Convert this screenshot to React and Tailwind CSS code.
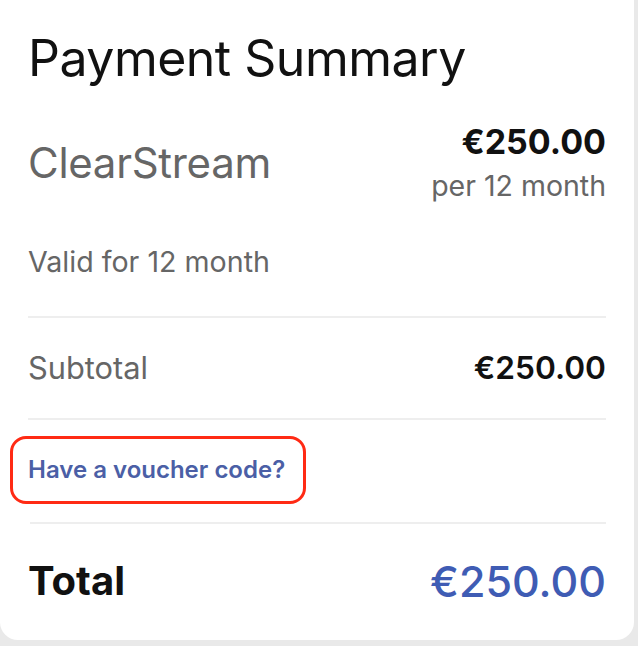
export default function App() {
  return (
    <div className="w-[638px] h-[646px] bg-[#e9e9e9] overflow-hidden" style={{ fontFamily: 'Inter, "Noto Sans", sans-serif' }}>
      <div className="w-[634px] h-[640px] bg-white rounded-b-[18px] px-[28px] pt-[26px] flex flex-col">
        <h1 className="text-[50px] leading-[64px] text-[#111] font-normal tracking-[-0.5px]">Payment Summary</h1>
        <div className="flex justify-between items-start mt-[32px]">
          <div className="text-[42px] text-[#666] mt-[18px] leading-[46px] tracking-[-0.3px]">ClearStream</div>
          <div className="flex flex-col items-end">
            <div className="text-[34px] font-bold text-[#111] leading-[40px]">€250.00</div>
            <div className="text-[28.5px] text-[#666] leading-[36px] mt-[6px]">per 12 month</div>
          </div>
        </div>
        <div className="text-[28.6px] text-[#666] mt-[40px] leading-[36px]">Valid for 12 month</div>
        <div className="h-[2px] bg-[#eeeeee] mt-[36px]" />
        <div className="flex justify-between items-center h-[100px]">
          <div className="text-[30.8px] text-[#666]">Subtotal</div>
          <div className="text-[31.7px] font-semibold text-[#111]">€250.00</div>
        </div>
        <div className="h-[2px] bg-[#eeeeee]" />
        <div className="mt-[16px] -ml-[18px] w-[296px] h-[68px] border-[3px] border-[#ff2a14] rounded-[16px] flex items-center pl-[15px]">
          <span className="text-[24px] font-semibold text-[#4b5fa6] whitespace-nowrap">Have a voucher code?</span>
        </div>
        <div className="h-[2px] bg-[#eeeeee] mt-[18px] ml-[2px]" />
        <div className="flex justify-between items-center h-[114px]">
          <div className="text-[40px] font-bold text-[#111]">Total</div>
          <div className="text-[43px] font-medium text-[#3f5cb4]">€250.00</div>
        </div>
      </div>
    </div>
  );
}
